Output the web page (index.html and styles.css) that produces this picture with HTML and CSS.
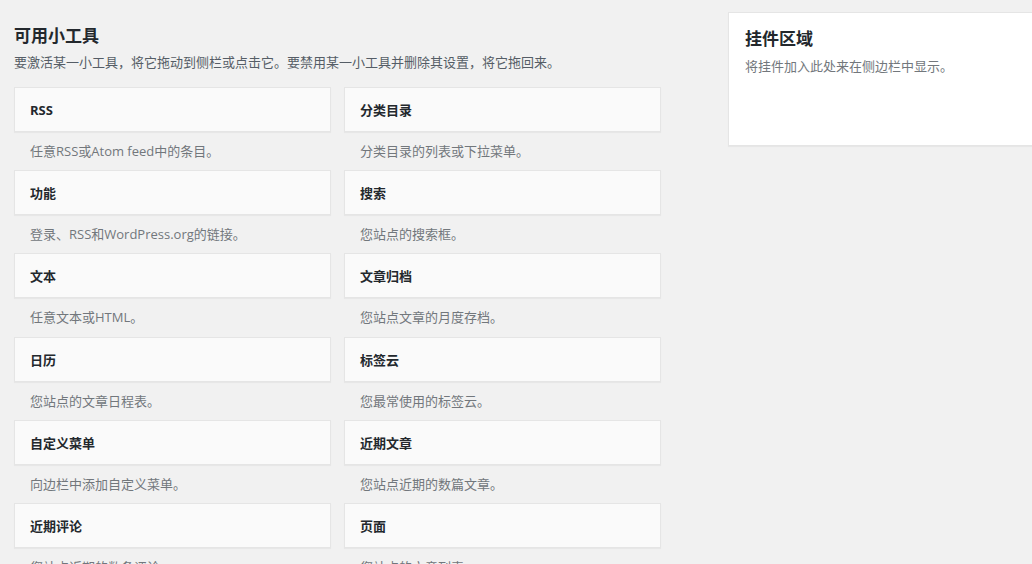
FILE: index.html
```html
<!DOCTYPE html>
<html lang="zh-CN">
<head>
<meta charset="utf-8">
<title>小工具</title>
<link rel="stylesheet" href="styles.css">
</head>
<body>
<div class="page">
  <main class="available">
    <h2 class="heading">可用小工具</h2>
    <p class="intro">要激活某一小工具，将它拖动到侧栏或点击它。要禁用某一小工具并删除其设置，将它拖回来。</p>
    <div class="widget-list">
      <div class="widget"><div class="widget-top">RSS</div><div class="widget-desc">任意RSS或Atom feed中的条目。</div></div>
      <div class="widget"><div class="widget-top">分类目录</div><div class="widget-desc">分类目录的列表或下拉菜单。</div></div>
      <div class="widget"><div class="widget-top">功能</div><div class="widget-desc">登录、RSS和WordPress.org的链接。</div></div>
      <div class="widget"><div class="widget-top">搜索</div><div class="widget-desc">您站点的搜索框。</div></div>
      <div class="widget"><div class="widget-top">文本</div><div class="widget-desc">任意文本或HTML。</div></div>
      <div class="widget"><div class="widget-top">文章归档</div><div class="widget-desc">您站点文章的月度存档。</div></div>
      <div class="widget"><div class="widget-top">日历</div><div class="widget-desc">您站点的文章日程表。</div></div>
      <div class="widget"><div class="widget-top">标签云</div><div class="widget-desc">您最常使用的标签云。</div></div>
      <div class="widget"><div class="widget-top">自定义菜单</div><div class="widget-desc">向边栏中添加自定义菜单。</div></div>
      <div class="widget"><div class="widget-top">近期文章</div><div class="widget-desc">您站点近期的数篇文章。</div></div>
      <div class="widget"><div class="widget-top">近期评论</div><div class="widget-desc">您站点近期的数条评论。</div></div>
      <div class="widget"><div class="widget-top">页面</div><div class="widget-desc">您站点的文章列表。</div></div>
    </div>
  </main>
  <aside class="sidebar">
    <h2 class="sidebar-title">挂件区域</h2>
    <p class="sidebar-desc">将挂件加入此处来在侧边栏中显示。</p>
  </aside>
</div>
</body>
</html>
```

FILE: styles.css
```css
html, body {
  margin: 0;
  padding: 0;
  background: #f1f1f1;
  overflow: hidden;
  height: 100%;
}
body {
  font-family: "Open Sans", "Noto Sans CJK SC", sans-serif;
  color: #23282d;
  font-size: 13px;
}
.page {
  display: flex;
  align-items: flex-start;
  width: 1040px;
  overflow: hidden;
}
.available {
  margin-left: 14px;
  width: 647px;
  padding-top: 24px;
  flex: none;
}
.heading {
  margin: 0;
  font-size: 17px;
  line-height: 24px;
  font-weight: 700;
  color: #23282d;
}
.intro {
  margin: 4px 0 0;
  font-size: 13px;
  line-height: 20px;
  color: #555d66;
  white-space: nowrap;
}
.widget-list {
  margin-top: 15px;
  display: grid;
  grid-template-columns: 317px 317px;
  column-gap: 13px;
}
.widget-top {
  box-sizing: border-box;
  height: 45px;
  border: 1px solid #e5e5e5;
  background: #fafafa;
  box-shadow: 0 1px 1px rgba(0, 0, 0, 0.04);
  padding: 0 15px;
  display: flex;
  align-items: center;
  font-size: 13px;
  font-weight: 700;
  color: #23282d;
}
.widget-desc {
  padding: 10px 16px 9px;
  line-height: 19.2px;
  font-size: 13px;
  color: #72777c;
  white-space: nowrap;
}
.sidebar {
  flex: none;
  margin-top: 12px;
  margin-left: 67px;
  box-sizing: border-box;
  width: 312px;
  height: 134px;
  background: #fff;
  border: 1px solid #e5e5e5;
  box-shadow: 0 1px 1px rgba(0, 0, 0, 0.04);
  padding: 14px 16px 0;
}
.sidebar-title {
  margin: 0;
  font-size: 17px;
  line-height: 24px;
  font-weight: 700;
  color: #23282d;
}
.sidebar-desc {
  margin: 5px 0 0;
  font-size: 13px;
  line-height: 20px;
  color: #72777c;
}
```
